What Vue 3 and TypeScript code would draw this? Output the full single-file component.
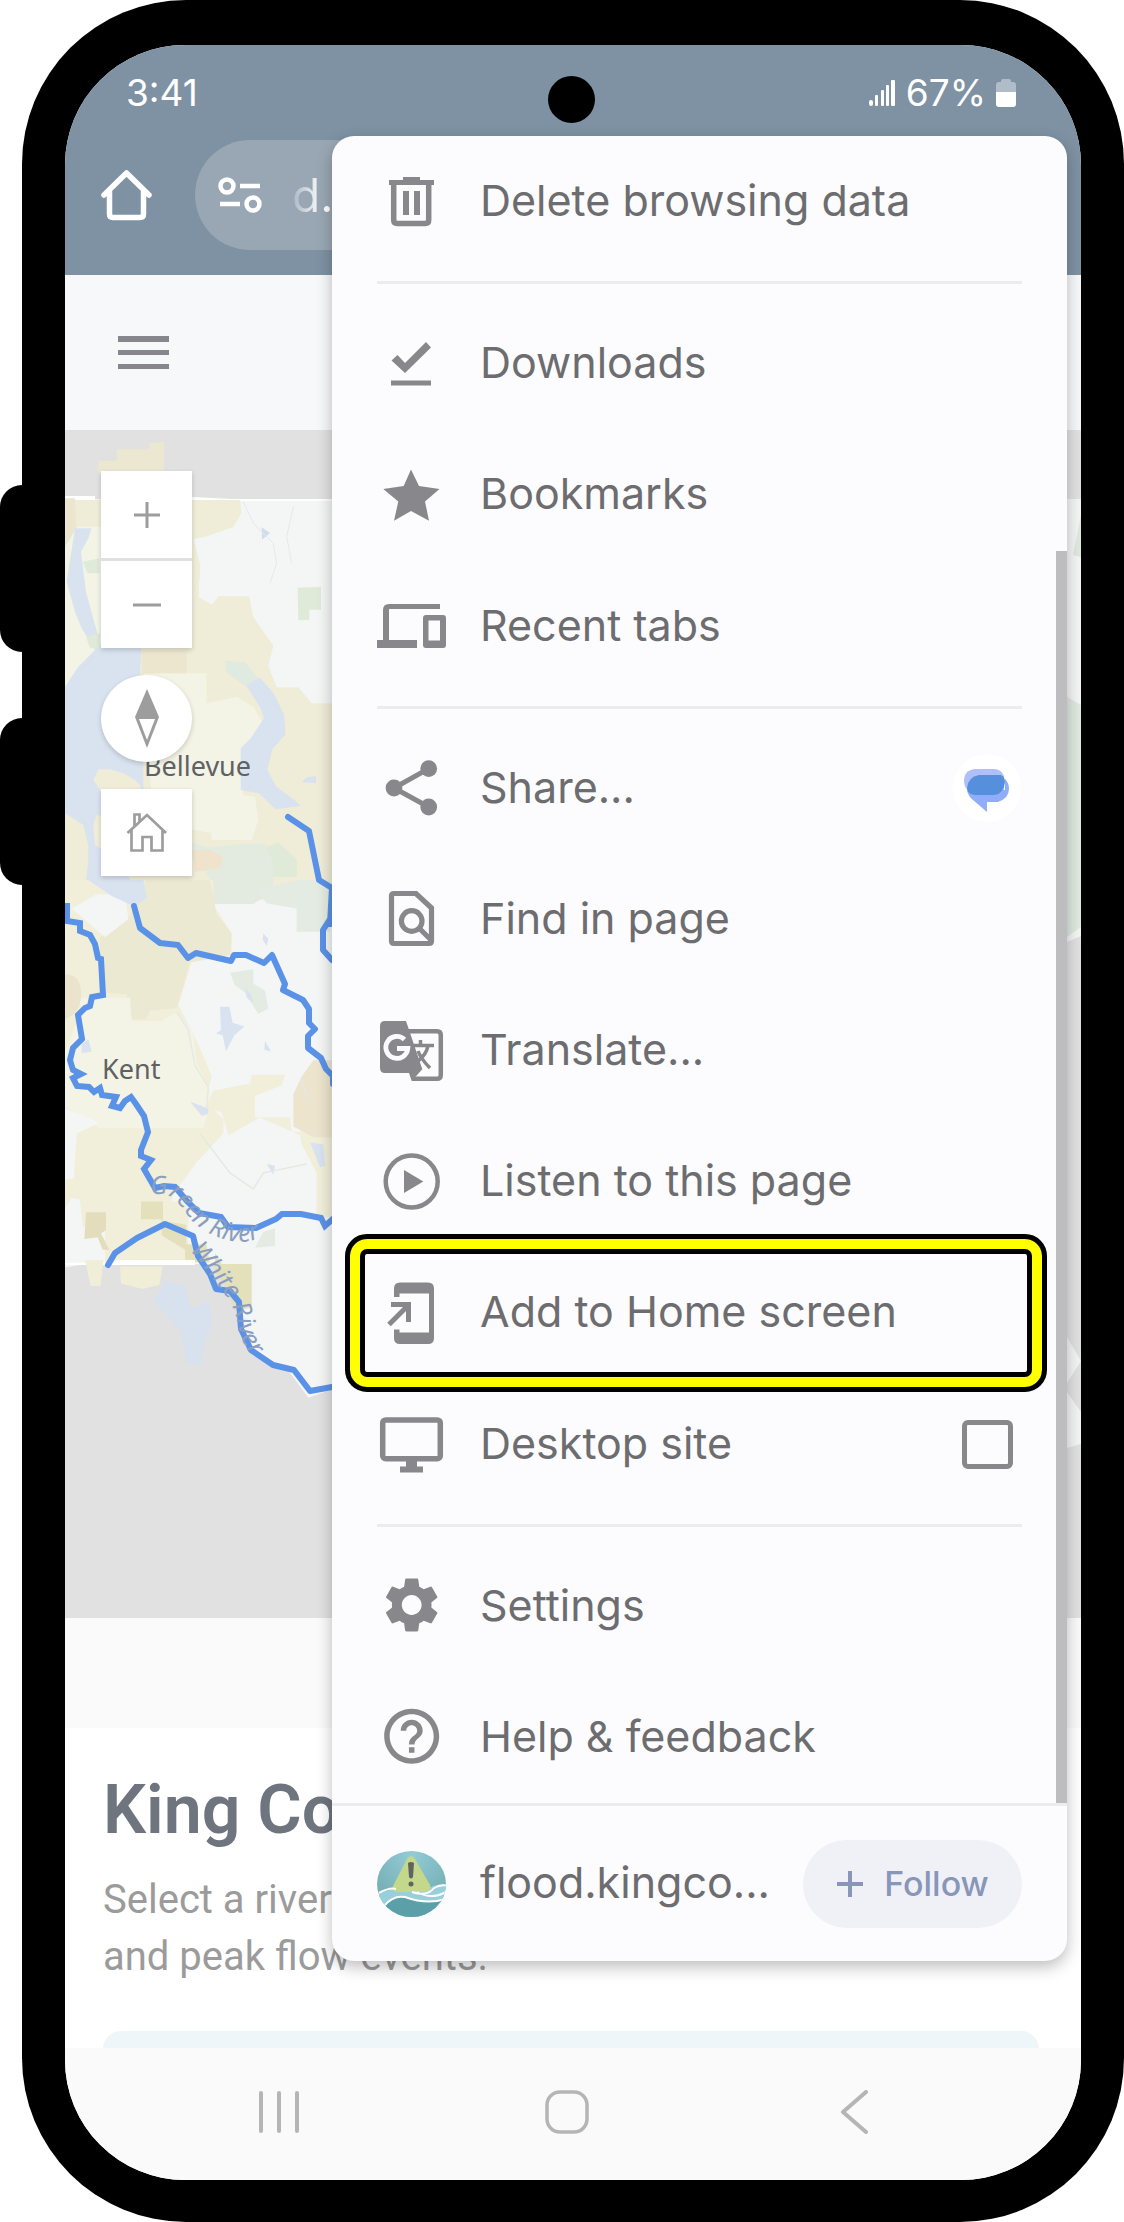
<script setup lang="ts">
interface MenuItem {
  id: string
  label: string
  icon: string
  trailing?: 'messages' | 'checkbox'
  highlighted?: boolean
}

const groups: MenuItem[][] = [
  [
    {
      id: 'delete',
      label: 'Delete browsing data',
      icon: '<path d="M26 10h17v3h14v5H12v-5h14z"/><path fill="none" stroke="currentColor" stroke-width="5.5" d="M16.7 16v37q0 3.500 3.500 3.500h28q3.500 0 3.500-3.500V16"/><path d="M26 24h6v24h-6zM37 24h6v24h-6z"/>',
    },
  ],
  [
    {
      id: 'downloads',
      label: 'Downloads',
      icon: '<path d="M14.500 31.500l6-5.500 7.500 8L49 13l5 5.500-26 25.500zM14 51.500h40v5H14z"/>',
    },
    {
      id: 'bookmarks',
      label: 'Bookmarks',
      icon: '<path d="M34 9.500L42 26l20.500 3L48 41.500l4 19.200L34 51 17 60.700l4.300-19.200L6.300 29l20.400-3z"/>',
    },
    {
      id: 'recent',
      label: 'Recent tabs',
      icon: '<path d="M0 49h6V19q0-6 6-6h51v5H12v31h28v8H0z"/><path fill-rule="evenodd" d="M49 24h17q3 0 3 3v27q0 3-3 3H49q-3 0-3-3V27q0-3 3-3zm2.500 5.500v20H63v-20z"/>',
    },
  ],
  [
    {
      id: 'share',
      label: 'Share...',
      icon: '<path fill="none" stroke="currentColor" stroke-width="5" d="M51.700 15.600L17 35l34.700 19"/><circle cx="51.700" cy="15.600" r="8.400"/><circle cx="17" cy="35" r="8.400"/><circle cx="51.700" cy="54" r="8.400"/>',
      trailing: 'messages',
    },
    {
      id: 'find',
      label: 'Find in page',
      icon: '<g fill="none" stroke="currentColor" stroke-width="5.200"><path d="M17 9.500h22L54.500 24v33q0 2.500-2.500 2.500H17q-2.500 0-2.500-2.500V12q0-2.500 2.500-2.500z"/><circle cx="34.700" cy="37" r="10.300"/><path d="M42 44l12 12"/></g>',
    },
    {
      id: 'translate',
      label: 'Translate...',
      icon: '<path fill="none" stroke="currentColor" stroke-width="4.500" d="M31 15.200h29q3.800 0 3.800 3.800v40q0 3.800-3.800 3.800H35"/><path d="M8 5h21l16.300 48.200L34.700 65 32 57H8q-5 0-5-5V10q0-5 5-5z"/><path fill="none" stroke="#fcfcff" stroke-width="4.800" d="M27.500 23.500a11 11 0 1 0 3.300 9H20"/><path fill="none" stroke="currentColor" stroke-width="3.500" d="M35 29.500h22M43.500 24v5M51 30q-2 9-10 15M41 35q3 8 12 17"/>',
    },
    {
      id: 'listen',
      label: 'Listen to this page',
      icon: '<circle cx="34.700" cy="34.500" r="26" fill="none" stroke="currentColor" stroke-width="4.500"/><path d="M27 23l19.300 11.500L27 46z"/>',
    },
    {
      id: 'home-screen',
      label: 'Add to Home screen',
      icon: '<path d="M17 19v-8.500q0-6 6-6h28q6 0 6 6V60q0 6-6 6H23q-6 0-6-6v-8.500h5.500v3H52v-39H22.500V19z"/><path fill="none" stroke="currentColor" stroke-width="5" d="M14 26.500h17.500v17.500M12 46.500l19-19"/>',
      highlighted: true,
    },
    {
      id: 'desktop',
      label: 'Desktop site',
      icon: '<rect x="5.700" y="10.900" width="57.600" height="38.900" rx="3" fill="none" stroke="currentColor" stroke-width="5.500"/><path d="M29 51h11v6.500h6v6H23v-6h6z"/>',
      trailing: 'checkbox',
    },
  ],
  [
    {
      id: 'settings',
      label: 'Settings',
      icon: '<path transform="translate(1.700 1) scale(2.750)" d="M19.140 12.940c.040-.300.060-.610.060-.940 0-.320-.020-.640-.070-.940l2.030-1.580c.180-.140.230-.410.120-.610l-1.920-3.320c-.120-.220-.370-.290-.590-.220l-2.390.960c-.500-.380-1.030-.700-1.620-.940l-.360-2.540c-.040-.240-.240-.410-.480-.410h-3.840c-.240 0-.430.170-.470.410l-.360 2.540c-.590.240-1.130.570-1.620.940l-2.390-.960c-.220-.080-.470 0-.590.220L2.740 8.870c-.120.210-.080.470.120.610l2.030 1.580c-.050.300-.090.630-.090.940s.020.640.070.940l-2.030 1.580c-.180.140-.230.410-.120.610l1.920 3.320c.120.220.370.290.590.220l2.390-.960c.500.380 1.030.700 1.620.940l.360 2.540c.050.240.240.410.480.410h3.840c.240 0 .440-.170.470-.410l.360-2.540c.590-.240 1.130-.560 1.620-.940l2.390.960c.220.080.470 0 .590-.220l1.920-3.320c.120-.220.070-.470-.120-.610l-2.010-1.580zM12 15.600c-1.980 0-3.600-1.620-3.600-3.600s1.620-3.600 3.600-3.600 3.600 1.620 3.600 3.600-1.620 3.600-3.600 3.600z"/>',
    },
    {
      id: 'help',
      label: 'Help & feedback',
      icon: '<path transform="translate(1.700 1.300) scale(2.750)" d="M11 18h2v-2h-2v2zm1-16C6.480 2 2 6.480 2 12s4.480 10 10 10 10-4.480 10-10S17.520 2 12 2zm0 18c-4.410 0-8-3.590-8-8s3.590-8 8-8 8 3.590 8 8-3.590 8-8 8zm0-14c-2.210 0-4 1.790-4 4h2c0-1.100.900-2 2-2s2 .900 2 2c0 2-3 1.750-3 5h2c0-2.250 3-2.500 3-5 0-2.210-1.790-4-4-4z"/>',
    },
  ],
]
</script>

<template>
  <div class="stage">
    <div class="side-keys" aria-hidden="true">
      <span class="key"></span>
      <span class="key"></span>
    </div>
    <div class="phone">
      <div class="screen">
        <header class="browser">
          <div class="status">
            <span>3:41</span>
            <span class="status-right">
              <svg width="27" height="28" viewBox="0 0 27 28" fill="#fff" aria-hidden="true">
                <rect x="0" y="21" width="4" height="6" rx="2" />
                <rect x="6" y="16" width="3" height="11" rx="1" />
                <rect x="12" y="11" width="3" height="16" rx="1" />
                <rect x="17" y="6" width="3" height="21" rx="1" />
                <rect x="22" y="1" width="4" height="26" rx="1" />
              </svg>
              <span>67%</span>
              <svg width="20" height="28" viewBox="0 0 20 28" aria-hidden="true">
                <path d="M5 2q0-2 2-2h6q2 0 2 2v1h2q3 0 3 3v8H0V6q0-3 3-3h2z" fill="#b0bdc8" />
                <path d="M0 13h20v12q0 3-3 3H3q-3 0-3-3z" fill="#fff" />
              </svg>
            </span>
          </div>
          <div class="toolbar">
            <button class="plain" aria-label="Home page">
              <svg width="52" height="52" viewBox="0 0 52 52" fill="none" stroke="#fff" stroke-width="5.500" stroke-linecap="round" stroke-linejoin="round">
                <path d="M3 26L25.500 4 48 26M8.500 23v22q0 3.500 3.500 3.500h27q3.500 0 3.500-3.500V23" />
              </svg>
            </button>
            <div class="address">
              <svg width="44" height="36" viewBox="0 0 44 36" fill="none" stroke="#fff" stroke-width="4.500" aria-hidden="true">
                <circle cx="9" cy="9" r="6.500" />
                <path d="M22 9h20M2 27h20" />
                <circle cx="35" cy="27" r="6.500" />
              </svg>
              <span class="url">d.</span>
            </div>
          </div>
          <span class="camera"></span>
        </header>

        <div class="site-header">
          <button class="plain" aria-label="Open navigation">
            <svg width="51" height="34" viewBox="0 0 51 34" fill="#87868c">
              <path d="M0 0h51v6H0zM0 14h51v5H0zM0 28h51v5H0z" />
            </svg>
          </button>
        </div>

        <section class="map" aria-label="River map">
          <svg class="map-art" viewBox="65 430 1016 1188" preserveAspectRatio="xMinYMin slice">
            <rect x="65" y="430" width="1016" height="1188" fill="#e1e1e1" />
            <path d="M65 499H1081V936l-14 6V1264H65z" fill="#f4f5f5" />
            <path d="M65 496h30v4H65zM192 497l40 2h100v2H192z" fill="#fff" />
            <g transform="translate(0 420) scale(.33333)">
              <path d="M295 122h55V88h98V70l44-5v95H295z" fill="#ebe7d0" />
              <path d="M195 240h525l6 55-35 42-110 20 20 80-5 95 40 22 20-25h130l8 90 30 65 15 100h70l25 60h62V1440H195z" fill="#efecd8" />
              <path d="M195 320h120v700H195zM430 760h190v90l90-20 50 30 30 50-60 80v150l-90 100-180-30z" fill="#f3f4e5" />
              <path d="M195 235h30l5 90-35 55zM425 690h135v70H425z" fill="#ece6cf" />
              <path d="M625 1110l140 20 10 70-20 60-120 0z" fill="#f3f4e5" />
              <path d="M225 325l50 0-10 30-22 40 15 120 45 165H425l-5 80 10 100v290l15 50-20 30-60-20-75-25-10 30 5 60 60 40 40 50 40 120H290l-35-80 10-80 0-50-15-60-55-35V800l40-60 50-50-40-65-20-50-25-90z" fill="#d9e3ef" />
              <path d="M280 1080l15-32 35 0 40 12 35 20 15 15 10 30-120 0z" fill="#efecd8" />
              <path d="M248 425l50-10v45h-35zM258 650l42-10v45l-30 0z" fill="#dfead9" />
              <path d="M675 722l60 5 40 50-40 20-55-40z" fill="#dfeae0" />
              <path d="M738 795l42-22 40 45 32 65 5 60-40 45-15 60 25 50 60 45 15 15-75 10-50-48-55-10v-125l30-30 40-60-10-30z" fill="#d9e3ef" />
              <path d="M800 1280l35-12 55 50v52h-80z" fill="#dfead9" />
              <path d="M555 1262l70 20 110-10 60 0 25 60v80l-60 40H640v-60z" fill="#e3ebe0" />
              <path d="M575 1290l60 0 35 25-10 30-75 10z" fill="#efe3cc" />
              <path d="M590 360l110-40 30-50h265v580l-60 0-40-48h-65l-25-65 15-60-60-85-20-100H655l-25 32-35-20 15-100z" fill="#f4f5f5" />
              <path d="M785 322l25 17-24 20z" fill="#cfdeeb" />
              <path d="M893 503l70-2v68h-35v30l-33 2z" fill="#dfead9" />
              <path d="M905 1087l15-15 28-4v22z" fill="#d9e3ef" />
              <path d="M730 245l30 65 60 60 10 60-20 60M880 260l-20 90 15 80" fill="none" stroke="#e6e9e9" stroke-width="3" />
            </g>
            <g transform="translate(0 880) scale(.33333 .35714)">
              <path d="M195 0H640V70l55 80v60l-120 20-40 120 60 110 40 90-20 70 55 50 0 40-80 80-70 90-30 90H195z" fill="#f1eeda" />
              <path d="M300 160l90-60L440 0h190l20 95 45 55-5 60-120 20-40 130-80 5-10 25H390l-10-70-80-5z" fill="#ece9d3" />
              <path d="M230 330h160l5 65h90l45-25 50 60 10 80 40 80-5 60-15 45H300l-105-60V480l50-120z" fill="#f3f4e5" />
              <path d="M195 265q45-5 48 50t-48 75z" fill="#ece3cc" />
              <path d="M640 590l110-20 5-25 100 0-10 30-80 30 0 60h105l5 40h120v240H950V820l-45-80-5-25-120-50-95 50-20-65-50-10z" fill="#f1eeda" />
              <path d="M880 600l25-50 35-45 55 0v215h-55l-60-30z" fill="#ece4cd" />
              <path d="M290 40l85 0 10 70-70 50-100-80z" fill="#f4f5f5" />
              <path d="M265 0h165l10 50-35 25-70-30z" fill="#d9e3ef" />
              <path d="M770 25l130-25h90v145H890V80L800 65zM690 260l70-10 0 40 35 20 10 50-30 15-40-60-30-20z" fill="#e3ebe2" />
              <path d="M660 355l28 0 10 45 35 10-30 25-25 45-10-45-20-5 15-10zM790 150l15 15-5 20-12-18zM795 450l18 30-20-5zM735 300l20 25 5 20-20-15zM570 620l55 20 0 15-20 5zM800 795l25 5-5 25zM930 735l40 5 5 60-15 5zM245 460l20-15 10 35-30 5z" fill="#d9e3ef" />
              <path d="M195 640l105 40-70 30-8 125-27 5zM195 920l20-30 25 5 20 180-65 10z" fill="#f4f5f5" />
              <path d="M315 900h250v170H315z" fill="#f1eeda" />
              <path d="M423 900h66v55l70 10v55h60l10 50H555v-35l-70-40v-45h-62z" fill="#e3e0bb" />
              <path d="M258 930h60v50l-15 10 25 45-20 0-15-35-40 5z" fill="#e4ddbd" />
              <path d="M620 1010l25 50 60 130 25 110 140 80 55 70 75-25V1000l-200 20z" fill="#f4f5f5" />
              <path d="M645 1045l20 30h90v122l-50 10-30-70-30-40z" fill="#e3e0bb" />
              <path d="M195 1072h60l70 0 30-8h230v14H195z" fill="#fff" />
              <path d="M255 1065l55 0-8 72-30 0zM360 1082l128 0-10 51-50 12-65-15z" fill="#f0eed7" />
              <path d="M460 1180l40-60 60 20 10 60 60-20 5 60-30 90 0 30-45-10-20-90z" fill="#d8e2ee" />
              <path d="M790 985l35-10v50l-60 5z" fill="#e3ebe2" />
              <path d="M530 370l35 50 20 100 40 60-5 60M600 710l90 110 70 45 30-45 130-25M905 560l20 60" fill="none" stroke="#e4e9e3" stroke-width="4" />
            </g>
            <path d="M1067 697l14 8v222l-14 10zM1081 515v42l-8-2z" fill="#dfe9e0" />
            <path d="M1067 942h14v322h-14z" fill="#e1e1e1" />
            <path d="M1067 1337l14 24-14 22zM1067 1392l14 20v32l-14 4z" fill="#f3f4f4" />
            <g fill="none" stroke="#5a92e8" stroke-linejoin="round">
              <path stroke-width="6" stroke-linecap="round" d="M288 817l21 14 10 49 13 8-2 36M332 888v28l-9 14v20l9 10" />
              <path stroke-width="6" stroke-linecap="round" d="M134 906l6 22 20 15 18 2 10 13 8-5 35 8 3-6h12l18 8 8-8 13 29-2 6 20 10 6 9v14l6 6-7 7v12l13 10 5 11 7 7v8" />
              <path stroke-width="6" stroke-linejoin="miter" d="M67 903v18l13 2v8l10 4 5 9 3 14 3 1 2 36-11 2-2 9-5 2-7 7 4 24-9 9-3 12 3 10 8 4-8 4 4 8 12 1 5 5 6-4 2 7 14 2-4 9 8 2 5-7 6-4 5 7 8 12 4 16-7 18v6l10 4-7 9 11 19 9-2 11 1 12 14 12 12 22 4 7 10 28 1 20-9 6-5h19l20 4 4 8 10-9 7 13" />
              <path stroke-width="6" stroke-linecap="round" d="M108 1265l7-12 22-15 28-14 28 12 5 20 12 18 6 15 14 2 9 11 2 27 10 21 22 15 21 5 16 21 22-4" />
            </g>
            <text class="place" x="144" y="776">Bellevue</text>
            <text class="place" x="102" y="1079">Kent</text>
            <defs>
              <path id="green-river" d="M151 1196C170 1188 180 1205 189 1217S215 1238 232 1241S262 1238 280 1228" />
              <path id="white-river" d="M190 1250L224 1293Q236 1310 238 1326T258 1365" />
            </defs>
            <text class="river"><textPath href="#green-river">Green River</textPath></text>
            <text class="river"><textPath href="#white-river">White River</textPath></text>
          </svg>
          <div class="controls">
            <div class="zoom">
              <button class="control" aria-label="Zoom in">
                <svg width="26" height="26" viewBox="0 0 26 26" stroke="#9d9d9d" stroke-width="3"><path d="M13 0v26M0 13h26" /></svg>
              </button>
              <button class="control" aria-label="Zoom out">
                <svg width="28" height="26" viewBox="0 0 28 26" stroke="#9d9d9d" stroke-width="3"><path d="M0 13h28" /></svg>
              </button>
            </div>
            <button class="control compass" aria-label="Reset bearing">
              <svg width="24" height="60" viewBox="0 0 24 60"><path d="M12 0l12 28-12 31L0 28z" fill="#9d9d9d" /><path d="M4 30h16l-8 21z" fill="#fff" /></svg>
            </button>
            <button class="control" aria-label="Default extent">
              <svg width="42" height="42" viewBox="0 0 42 42" fill="none" stroke="#9d9d9d" stroke-width="2.700">
                <path d="M1.500 21L21 3l19 18M5.500 17v21.500h11V25h9v13.500h11V17M8.500 15V2.500h5v7" />
              </svg>
            </button>
          </div>
        </section>

        <div class="strip"></div>

        <main class="content">
          <h1>King County</h1>
          <p>Select a river<br />and peak flow events.</p>
          <div class="notice"></div>
        </main>

        <nav class="navbar" aria-label="System navigation">
          <button class="plain" aria-label="Recent apps">
            <svg width="44" height="44" viewBox="0 0 44 44" stroke="#b5b5b5" stroke-width="4" stroke-linecap="round"><path d="M4 3v38M22 3v38M40 3v38" /></svg>
          </button>
          <button class="plain" aria-label="Home">
            <svg width="44" height="44" viewBox="0 0 44 44" fill="none" stroke="#b5b5b5" stroke-width="3.500"><rect x="2" y="2" width="40" height="40" rx="13" /></svg>
          </button>
          <button class="plain" aria-label="Back">
            <svg width="44" height="44" viewBox="0 0 44 44" fill="none" stroke="#b5b5b5" stroke-width="4" stroke-linecap="round" stroke-linejoin="round"><path d="M34 2L11 22l23 20" /></svg>
          </button>
        </nav>

        <aside class="menu" aria-label="Browser menu">
          <div class="list">
            <template v-for="(group, index) in groups" :key="index">
              <hr v-if="index > 0" />
              <component
                :is="item.trailing === 'checkbox' ? 'label' : 'button'"
                v-for="item in group"
                :key="item.id"
                class="row"
                :class="{ highlighted: item.highlighted }"
              >
                <svg class="icon" viewBox="0 0 70 70" fill="currentColor" aria-hidden="true" v-html="item.icon"></svg>
                <span class="label">{{ item.label }}</span>
                <svg v-if="item.trailing === 'messages'" width="69" height="69" viewBox="0 0 69 69" aria-hidden="true">
                  <circle cx="34" cy="34" r="34" fill="#fff" />
                  <path d="M22 15h19q7 0 10 7v18H19Q11 35 11 27q0-11 11-12z" fill="#aec0f7" />
                  <path d="M14 36h38v-11q4 4 4 10 0 9-11 13H34v10L20 46q-5-4-6-10z" fill="#8fadf8" />
                  <path d="M26 21h22q4 2 4 7-1 12-11 13H22q-8-1-8-7 1-11 12-13z" fill="#5690dc" />
                </svg>
                <input v-if="item.trailing === 'checkbox'" type="checkbox" class="tick" />
              </component>
            </template>
            <span class="scrollbar"></span>
          </div>
          <div class="site-row">
            <svg class="icon" viewBox="0 0 70 70" aria-hidden="true">
              <defs>
                <clipPath id="badge"><ellipse cx="34.500" cy="35" rx="34.500" ry="33" /></clipPath>
                <radialGradient id="sky" cx=".5" cy=".1" r=".7"><stop offset="0" stop-color="#93cbd6" /><stop offset="1" stop-color="#76aeb4" /></radialGradient>
              </defs>
              <g clip-path="url(#badge)">
                <rect width="70" height="70" fill="url(#sky)" />
                <path d="M0 46Q12 40 20 40h20q12 0 16-3 7-2 14-2v35H0z" fill="#97cfdb" />
                <path d="M30 10q4-6 8 0l15 26q2 6-4 7l-28 0q-7 0-5-6z" fill="#c3d88b" />
                <path d="M31 14q3-2 6 0l-1 14q-2 3-4 0z" fill="#626262" />
                <circle cx="34" cy="35" r="2.500" fill="#626262" />
                <path d="M9 56Q18 46 28 48q22 8 42 2v20H0z" fill="#5b9fa8" />
                <g fill="none" stroke="#fff" stroke-width="2">
                  <path d="M2 44q11-6 17-4M35 43q15 5 22-4 7-4 14-2M40 43q14 8 29 0" />
                  <path d="M7 57Q16 46 28 48q22 8 40 2" />
                </g>
              </g>
            </svg>
            <span class="label">flood.kingco...</span>
            <button class="follow">
              <svg width="28" height="28" viewBox="0 0 28 28" stroke="#8796b9" stroke-width="4" aria-hidden="true"><path d="M14 1v26M1 14h26" /></svg>
              Follow
            </button>
          </div>
        </aside>
      </div>
    </div>
  </div>
</template>

<style>
body {
  margin: 0;
  background: #fff;
}
</style>

<style scoped>
.stage {
  display: flex;
  font-family: Inter, Roboto, sans-serif;
}
.side-keys {
  display: flex;
  flex: none;
  flex-direction: column;
  gap: 66px;
  width: 22px;
  padding-top: 485px;
}
.key {
  width: 44px;
  height: 167px;
  border-radius: 24px;
  background: #000;
}
.phone {
  position: relative;
  flex: 1;
  min-width: 0;
  padding: 45px 43px 42px;
  border-radius: 164px;
  background: #000;
}
.screen {
  position: relative;
  display: flex;
  flex-direction: column;
  overflow: hidden;
  border-radius: 120px;
  background: #fff;
}
button {
  margin: 0;
  border: 0;
  padding: 0;
  font: inherit;
  color: inherit;
}
.plain {
  display: flex;
  background: none;
}
svg {
  display: block;
  flex: none;
}
.browser {
  position: relative;
  height: 230px;
  background: #7e92a3;
}
.status {
  display: flex;
  align-items: center;
  justify-content: space-between;
  height: 95px;
  padding: 0 65px 0 61px;
  font-size: 37px;
  color: #fff;
}
.status-right {
  display: flex;
  align-items: center;
  gap: 10px;
}
.camera {
  position: absolute;
  top: 31px;
  left: 50%;
  width: 47px;
  height: 47px;
  margin-left: -25px;
  border-radius: 50%;
  background: #000;
}
.toolbar {
  display: flex;
  align-items: center;
  gap: 42px;
  padding: 0 180px 0 36px;
}
.address {
  display: flex;
  flex: 1;
  align-items: center;
  gap: 30px;
  height: 110px;
  padding-left: 23px;
  border-radius: 55px;
  background: #99a7b4;
}
.url {
  font-size: 46px;
  background: linear-gradient(90deg, #a8b6c3, #fff 30px);
  background-clip: text;
  color: transparent;
}
.site-header {
  display: flex;
  align-items: center;
  height: 155px;
  padding-left: 53px;
  background: #f7f8fa;
}
.map {
  position: relative;
  height: 1188px;
  overflow: hidden;
}
.map-art {
  width: 100%;
  height: 100%;
}
.place {
  font: 27px "Noto Sans", sans-serif;
  fill: #5f6164;
}
.river {
  font: italic 25px "Noto Sans", sans-serif;
  fill: #8a9fbf;
}
.controls {
  position: absolute;
  top: 41px;
  left: 36px;
  display: flex;
  flex-direction: column;
  gap: 27px;
}
.zoom {
  display: flex;
  flex-direction: column;
  gap: 3px;
  background: #e0e0e0;
  box-shadow: 0 2px 5px rgba(0, 0, 0, 0.18);
}
.control {
  display: flex;
  align-items: center;
  justify-content: center;
  width: 91px;
  height: 87px;
  background: #fff;
  box-shadow: 0 2px 5px rgba(0, 0, 0, 0.18);
}
.zoom .control {
  box-shadow: none;
}
.compass {
  border-radius: 50%;
}
.strip {
  height: 110px;
  background: #fafafa;
}
.content {
  display: flex;
  flex-direction: column;
  height: 320px;
  padding: 0 42px 0 38px;
  overflow: hidden;
  box-sizing: border-box;
  font-family: Roboto, sans-serif;
}
h1 {
  margin: 42px 0 0;
  font-size: 68px;
  font-weight: 600;
  line-height: 80px;
  color: #6f757f;
}
p {
  margin: 21px 0 0;
  font-size: 40px;
  line-height: 57px;
  color: #9b9b9b;
}
.notice {
  flex: none;
  height: 60px;
  margin-top: 46px;
  border-radius: 18px;
  background: #eef6f9;
}
.navbar {
  display: flex;
  align-items: center;
  justify-content: space-between;
  height: 128px;
  padding: 0 205px 4px 192px;
  background: #fafafa;
}
.menu {
  position: absolute;
  top: 91px;
  right: 14px;
  bottom: 219px;
  left: 267px;
  display: flex;
  flex-direction: column;
  border-radius: 22px;
  background: #fcfcff;
  box-shadow: 0 6px 16px rgba(0, 0, 0, 0.26);
  color: #6d6d70;
  font-size: 43px;
}
.list {
  position: relative;
  display: flex;
  flex: 1;
  flex-direction: column;
}
hr {
  width: calc(100% - 90px);
  height: 3px;
  margin: 14px auto;
  border: 0;
  background: #ececee;
}
.row {
  position: relative;
  display: flex;
  flex: 1;
  align-items: center;
  gap: 33px;
  padding: 0 45px;
  background: none;
  text-align: left;
}
.icon {
  width: 70px;
  height: 70px;
  color: #87878c;
}
.label {
  flex: 1;
  padding-bottom: 3px;
  white-space: nowrap;
}
.highlighted::after {
  position: absolute;
  inset: -13px 20px -13px 13px;
  border: 5px solid #000;
  border-radius: 22px;
  box-shadow: inset 0 0 0 10px #ff0, inset 0 0 0 15px #000;
  content: "";
}
.tick {
  width: 51px;
  height: 49px;
  margin: 0 9px 0 0;
  border: 5px solid #87878c;
  border-radius: 6px;
  appearance: none;
}
.scrollbar {
  position: absolute;
  top: 415px;
  right: 0;
  bottom: 0;
  width: 11px;
  background: #bdbdc0;
}
.site-row {
  display: flex;
  align-items: center;
  gap: 33px;
  height: 155px;
  padding: 0 45px;
  border-top: 3px solid #ececee;
}
.follow {
  display: flex;
  align-items: center;
  justify-content: center;
  gap: 20px;
  width: 219px;
  height: 88px;
  border-radius: 44px;
  background: #eff1f6;
  color: #8796b9;
  font-size: 34px;
  font-weight: 500;
}
</style>
